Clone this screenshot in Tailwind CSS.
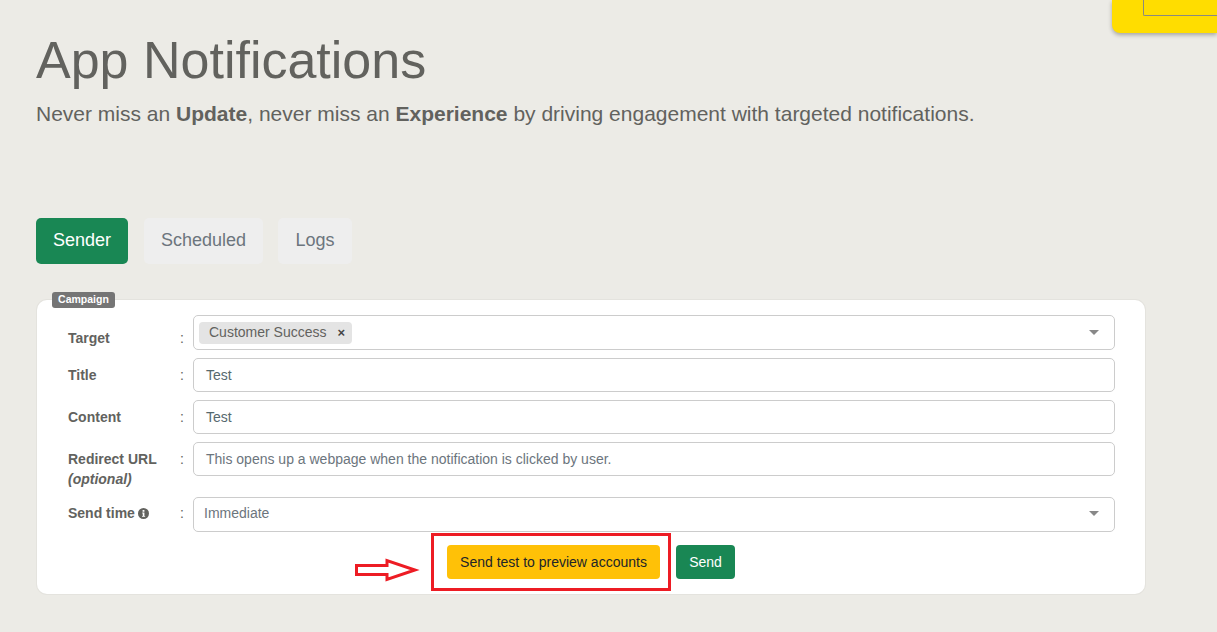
<!DOCTYPE html>
<html lang="en">

<head>
    <meta charset="UTF-8">
    <title>App Notifications</title>
    <script src="https://cdn.jsdelivr.net/npm/@tailwindcss/browser@4"></script>
</head>

<body class="bg-[#ecebe6] font-['Liberation_Sans',Arial,sans-serif] text-[#62625e] h-[632px] overflow-hidden">
    <!-- yellow panel cut off by the top of the window -->
    <div class="absolute top-0 right-0 w-[105px] h-[33px] bg-[#ffdd00] rounded-bl-[8px] shadow-[0_2px_4px_rgba(0,0,0,0.3)]">
        <div class="absolute top-0 right-0 w-[74px] h-[16px] border-l border-b border-[#8a8a80] rounded-bl-[2px]"></div>
    </div>

    <div class="pl-[36px] pt-[30px]">
        <h1 class="text-[52px] leading-[60px]">App Notifications</h1>
        <p class="text-[21px] leading-[28px] mt-[10px]">Never miss an <b>Update</b>, never miss an <b>Experience</b> by driving engagement with targeted notifications.</p>

        <div class="flex mt-[90px] text-[18px]">
            <button class="w-[92px] h-[46px] pb-[2px] rounded-[5px] bg-[#198754] text-white">Sender</button>
            <button class="ml-[16px] w-[119px] h-[46px] pb-[2px] rounded-[5px] bg-[#eeeeee] text-[#6c757d]">Scheduled</button>
            <button class="ml-[15px] w-[74px] h-[46px] pb-[2px] rounded-[5px] bg-[#eeeeee] text-[#6c757d]">Logs</button>
        </div>

        <section class="relative ml-px mt-[36px] w-[1108px] h-[294px] bg-white rounded-[10px] shadow-[0_0_0_1px_#e4e3de] pl-[31px] pr-[30px] pt-[15px]">
            <span class="absolute left-[15px] -top-[8px] w-[63px] h-[16px] rounded-[3px] bg-[#757575] text-white text-[10.5px] leading-[15px] font-bold text-center">Campaign</span>

            <div class="flex flex-col gap-[8px] text-[14px]">
                <div class="flex">
                    <div class="w-[112px] pt-[13px] leading-[20px] font-bold">Target</div>
                    <div class="w-[13px] pt-[13px] leading-[20px]">:</div>
                    <div class="flex items-center w-[922px] h-[35px] border border-[#cccccc] rounded-[5px] pl-[5px] pr-[15px]">
                        <span class="flex items-center w-[153px] h-[22px] rounded-[4px] bg-[#e4e4e4] pl-[10px]">
                            Customer Success
                            <span class="ml-[11px] text-[13px] font-bold text-[#444]">×</span>
                        </span>
                        <span class="ml-auto w-0 h-0 border-x-[5px] border-x-transparent border-t-[5px] border-t-[#888888]"></span>
                    </div>
                </div>

                <div class="flex">
                    <div class="w-[112px] pt-[7px] leading-[20px] font-bold">Title</div>
                    <div class="w-[13px] pt-[7px] leading-[20px]">:</div>
                    <div class="flex items-center w-[922px] h-[34px] border border-[#cccccc] rounded-[5px] px-[12px] text-[#56696e]">Test</div>
                </div>

                <div class="flex">
                    <div class="w-[112px] pt-[7px] leading-[20px] font-bold">Content</div>
                    <div class="w-[13px] pt-[7px] leading-[20px]">:</div>
                    <div class="flex items-center w-[922px] h-[34px] border border-[#cccccc] rounded-[5px] px-[12px] text-[#56696e]">Test</div>
                </div>

                <div class="flex">
                    <div class="w-[112px] pt-[7px] leading-[20px] font-bold">Redirect URL<br><i>(optional)</i></div>
                    <div class="w-[13px] pt-[7px] leading-[20px]">:</div>
                    <div class="flex items-center w-[922px] h-[34px] border border-[#cccccc] rounded-[5px] px-[12px] text-[#6c757d]">This opens up a webpage when the notification is clicked by user.</div>
                </div>

                <div class="flex">
                    <div class="flex items-center gap-[3px] w-[112px] h-[32px] font-bold">
                        Send time
                        <svg class="w-[11px] h-[11px]" viewBox="0 0 12 12">
                            <circle cx="6" cy="6" r="6" fill="#62625e"></circle>
                            <rect x="5" y="2.2" width="2" height="1.9" fill="#fff"></rect>
                            <path d="M4.6 5h2.4v3.6h0.8v1H4.4v-1h0.8V6H4.6z" fill="#fff"></path>
                        </svg>
                    </div>
                    <div class="w-[13px] h-[32px] leading-[32px]">:</div>
                    <div class="flex items-center justify-between w-[922px] h-[35px] pb-[2px] border border-[#cccccc] rounded-[5px] pl-[10px] pr-[15px] text-[#6c757d]">
                        Immediate
                        <span class="w-0 h-0 border-x-[5px] border-x-transparent border-t-[5px] border-t-[#888888]"></span>
                    </div>
                </div>
            </div>

            <div class="flex items-center mt-[13px] ml-[287px] h-[34px] text-[14px]">
                <svg class="w-[66px] h-[24px] mt-[15px] mr-[10px]" viewBox="0 0 66 24">
                    <path d="M1.5 7.5H32V2.5L60 12L32 21.5V16.5H1.5z" fill="#fff" stroke="#ed1c24" stroke-width="3"></path>
                </svg>
                <div class="flex items-center shrink-0 w-[240px] h-[58px] border-[3px] border-[#ed1c24] pl-[13px]">
                    <button class="w-[213px] h-[34px] rounded-[4px] bg-[#ffc107] text-[#212529]">Send test to preview accounts</button>
                </div>
                <button class="ml-[5px] w-[59px] h-[34px] rounded-[4px] bg-[#198754] text-white">Send</button>
            </div>
        </section>
    </div>
</body>

</html>
